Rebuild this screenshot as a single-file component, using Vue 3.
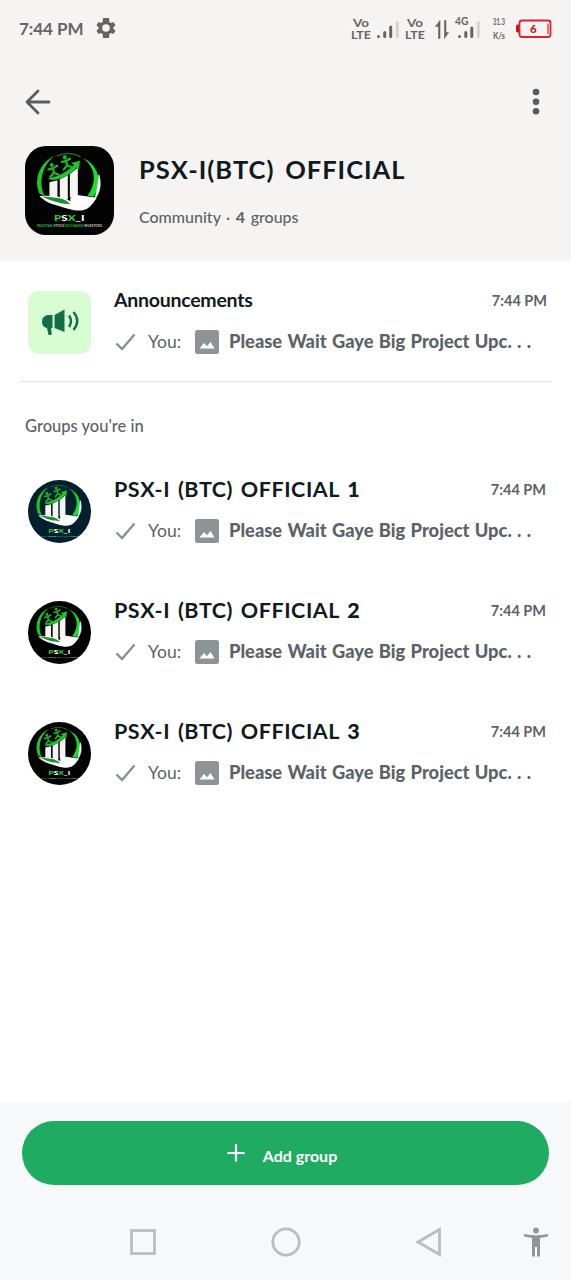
<script setup>
const preview = 'Please Wait Gaye Big Project Upc. . .'
const groups = [
  { name: 'PSX-I (BTC) OFFICIAL', number: '1', tone: 'navy' },
  { name: 'PSX-I (BTC) OFFICIAL', number: '2', tone: 'black' },
  { name: 'PSX-I (BTC) OFFICIAL', number: '3', tone: 'black' },
]
</script>

<template>
  <div class="screen">
    <svg class="defs" width="0" height="0" aria-hidden="true">
      <symbol id="logo" viewBox="32 32 266 266">
        <path d="M120 62C76 82 57 132 75 174L90 181C73 146 79 94 120 62Z" fill="#18c92b" />
        <path d="M127 62A82 82 0 0 1 198 64" fill="none" stroke="#17701f" stroke-width="4" />
        <path d="M203 67C243 92 249 142 219 180L236 184C266 145 254 87 203 67Z" fill="#19df2b" />
        <path d="M253 118C262 150 254 176 239 192C247 171 250 149 253 118Z" fill="#fff" stroke="#fff" stroke-width="2" />
        <path d="M105 140L129 134V185H105ZM136 131L160 118V192H136ZM166 116L190 96V186H166Z" fill="#f4f4f4" />
        <path d="M101 127C105 142 155 132 187 97L193 104L197 75L169 83L178 89C154 113 119 128 101 127Z" fill="#20c72d" stroke="#07310b" stroke-width="1" />
        <g fill="none" stroke="#20b82b" stroke-width="6.5" stroke-linecap="round">
          <path d="M102 102L116 98L128 91M116 99L118 112L108 124M118 112L132 117" />
          <path d="M142 80L155 76L167 70M155 77L158 90L148 102M158 90L171 95" />
        </g>
        <circle cx="112" cy="89" r="6" fill="#20b82b" />
        <circle cx="151" cy="66" r="6" fill="#20b82b" />
        <path d="M75 182C92 179 112 181 131 184C147 187 158 193 169 197C162 186 177 179 194 179L247 187C239 198 231 211 220 218C194 235 151 216 126 209C103 204 90 194 75 182Z" fill="#fff" />
        <path d="M80 183C103 184 122 186 139 189C151 191 161 200 168 206C143 206 119 199 80 183Z" fill="#159326" />
        <text x="119" y="257" textLength="91" lengthAdjust="spacingAndGlyphs" font-size="23" font-weight="900" fill="#fff"><tspan fill="#20d92e">P</tspan>S<tspan fill="#20d92e">X</tspan>_I</text>
        <text x="67" y="273" textLength="195" lengthAdjust="spacingAndGlyphs" font-size="11" font-weight="900" fill="#20b52b">PAKISTAN <tspan fill="#bbb">STOCK</tspan> EXCHANGE <tspan fill="#bbb">INVESTORS</tspan></text>
      </symbol>
    </svg>

    <header class="header">
      <div class="status">
        <span class="clock">7:44 PM</span>
        <svg class="gear" width="20" height="20" viewBox="2 2 20 20">
          <path fill="#666462" fill-rule="evenodd" d="M19.4 13a7.8 7.8 0 0 0 0-2l2.1-1.6-2-3.5-2.5 1a7.6 7.6 0 0 0-1.7-1L15 2H9l-.4 3.9a7.6 7.6 0 0 0-1.7 1l-2.5-1-2 3.5L4.6 11a7.8 7.8 0 0 0 0 2l-2.2 1.6 2 3.5 2.5-1a7.6 7.6 0 0 0 1.7 1L9 22h6l.4-3.9a7.6 7.6 0 0 0 1.7-1l2.5 1 2-3.5ZM12 8.2a3.8 3.8 0 1 1 0 7.6 3.8 3.8 0 0 1 0-7.6Z" />
        </svg>
        <svg class="signals" width="211" height="28" viewBox="345 14 211 28">
          <g fill="#666462" font-weight="700">
            <text x="353" y="26.5" font-size="10.5" textLength="16" lengthAdjust="spacingAndGlyphs">Vo</text>
            <text x="351" y="39" font-size="11.5" textLength="20" lengthAdjust="spacingAndGlyphs">LTE</text>
            <text x="407" y="26.5" font-size="10.5" textLength="16" lengthAdjust="spacingAndGlyphs">Vo</text>
            <text x="405" y="39" font-size="11.5" textLength="20" lengthAdjust="spacingAndGlyphs">LTE</text>
            <text x="455" y="25.3" font-size="11.5" textLength="13.5" lengthAdjust="spacingAndGlyphs">4G</text>
            <text x="493" y="24.5" font-size="8.5" textLength="12" lengthAdjust="spacingAndGlyphs">31.3</text>
            <text x="493" y="38.5" font-size="8.5" textLength="12" lengthAdjust="spacingAndGlyphs">K/s</text>
          </g>
          <g stroke-width="3" stroke-linecap="round" stroke="#666462">
            <path d="M378.5 36.5v0M384.7 32.5v4M390.7 27v9.5M459.5 36.5v0M465.8 32.5v4M471.8 28v8.5" />
            <path d="M397.2 22.5v14M478.3 22.5v14" stroke="#d5d3d1" />
          </g>
          <path d="M440 38.5V20.5L435.5 26.5H438.500V38.500ZM444.500 20.500V38.500L448.500 32.500H446V20.500Z" fill="#666462" stroke="#666462" stroke-width=".6" />
          <rect x="519.5" y="20.5" width="31" height="16.5" rx="2.5" fill="none" stroke="#d8242b" stroke-width="1.8" />
          <path d="M519 24.5h-1.5q-1.5 0-1.5 2v4q0 2 1.5 2h1.5Z" fill="#c3151c" />
          <path d="M548 23.5v10.5" stroke="#d8242b" stroke-width="1.2" />
          <text x="530" y="32.7" font-size="11.5" font-weight="900" fill="#c3151c">6</text>
        </svg>
      </div>
      <nav class="toolbar">
        <svg width="26" height="26" viewBox="0 0 26 26" fill="none" stroke="#555d62" stroke-width="2.8" stroke-linecap="round" stroke-linejoin="round">
          <path d="M24 13H2M13 2L2 13L13 24" />
        </svg>
        <svg width="8" height="28" viewBox="0 0 8 28" fill="#555d62">
          <circle cx="4" cy="4" r="3.3" /><circle cx="4" cy="13.7" r="3.3" /><circle cx="4" cy="23.3" r="3.3" />
        </svg>
      </nav>
      <div class="community">
        <svg class="community-logo"><use href="#logo" /></svg>
        <div>
          <h1>PSX-I(BTC) OFFICIAL</h1>
          <p class="meta">Community · <b>4</b> groups</p>
        </div>
      </div>
    </header>

    <main>
      <section class="row announcement">
        <div class="avatar megaphone">
          <svg width="40" height="30" viewBox="0 0 40 30">
            <path fill="#146c48" d="M8 7h4.500v13H11l.8 6q0 1-2 1H8.500L7 20Q2 19 2 13.500T8 7ZM14.500 7L24.500 1.500V24L14.500 20Z" />
            <path fill="none" stroke="#146c48" stroke-width="2.4" d="M29 7.5Q33 13 29 19M33.500 4Q41 13 33.500 22" />
          </svg>
        </div>
        <div class="body">
          <div class="line"><h2 class="plain">Announcements</h2><time>7:44 PM</time></div>
          <div class="message">
            <svg class="tick" width="21" height="18" viewBox="0 0 21 18"><path d="M1.5 10.5L7 16L19.5 1.5" /></svg>
            <span class="you">You:</span>
            <svg class="photo" width="24" height="24" viewBox="0 0 24 24"><rect width="24" height="24" rx="2.5" /><path d="M4.5 18.500L9 13L12 16.200L15.500 12L19.500 18.500Z" /></svg>
            <span class="preview">{{ preview }}</span>
          </div>
        </div>
      </section>
      <h3>Groups you're in</h3>
      <section v-for="group in groups" :key="group.number" class="row group">
        <div class="avatar round" :class="group.tone"><svg><use href="#logo" /></svg></div>
        <div class="body">
          <div class="line"><h2>{{ group.name }} <b>{{ group.number }}</b></h2><time>7:44 PM</time></div>
          <div class="message">
            <svg class="tick" width="21" height="18" viewBox="0 0 21 18"><path d="M1.5 10.5L7 16L19.5 1.5" /></svg>
            <span class="you">You:</span>
            <svg class="photo" width="24" height="24" viewBox="0 0 24 24"><rect width="24" height="24" rx="2.5" /><path d="M4.5 18.500L9 13L12 16.200L15.500 12L19.500 18.500Z" /></svg>
            <span class="preview">{{ preview }}</span>
          </div>
        </div>
      </section>
    </main>

    <footer>
      <button class="add">
        <svg width="18" height="18" viewBox="0 0 18 18" fill="none" stroke="#fff" stroke-width="2.2" stroke-linecap="round"><path d="M9 1.2v15.600M1.200 9h15.600" /></svg>
        <span>Add group</span>
      </button>
      <div class="system-nav">
        <svg width="26" height="26" viewBox="0 0 26 26"><rect x="1.5" y="1.5" width="23" height="23" /></svg>
        <svg width="30" height="30" viewBox="0 0 30 30"><circle cx="15" cy="15" r="13.2" /></svg>
        <svg width="26" height="30" viewBox="0 0 26 30"><path d="M23.5 2.5v25L2 15Z" /></svg>
        <svg class="person" width="26" height="30" viewBox="0 0 26 30"><circle cx="13" cy="3.5" r="2.9" /><path d="M1 7Q13 9.500 25 7V9.500L17 11V29.500H14V20H12V29.500H9V11L1 9.500Z" /></svg>
      </div>
    </footer>
  </div>
</template>

<style>
body { margin: 0; }
</style>

<style scoped>
.screen { width: 571px; height: 1280px; display: flex; flex-direction: column; overflow: hidden; background: #fff; color: #101a20; font-family: Lato, "Open Sans", sans-serif; }
.screen svg { flex: none; display: block; }
.screen .defs { display: none; }
h1, h2, h3, p { margin: 0; white-space: nowrap; }
.header { height: 261px; box-sizing: border-box; background: #f6f4f2; }
.status { height: 58px; box-sizing: border-box; padding: 0 15px 2px 19px; display: flex; align-items: center; }
.clock { width: 77px; font-size: 17px; font-weight: 700; color: #666462; }
.signals { margin-left: auto; }
.toolbar { height: 88px; box-sizing: border-box; padding: 0 31px 1px 25px; display: flex; align-items: center; justify-content: space-between; }
.community { display: flex; gap: 25px; padding-left: 25px; }
.community-logo { width: 89px; height: 89px; border-radius: 21px; background: #020302; }
h1 { margin-top: 7px; height: 33px; line-height: 32px; font-size: 25.5px; font-weight: 700; letter-spacing: 1px; word-spacing: 3.5px; }
.meta { margin-top: 19px; height: 24px; line-height: 24px; font-size: 16px; font-weight: 500; word-spacing: 1.5px; color: #5b6368; }
.row { display: flex; padding: 0 25px 0 28px; }
.announcement { height: 91px; margin: 0 19px 0 20px; padding: 29px 5px 0 8px; border-bottom: 1px solid #e3e4e5; }
.avatar { flex: none; width: 63px; height: 63px; margin: 1px 23px 0 0; }
.megaphone { display: flex; align-items: center; justify-content: center; border-radius: 11px; background: #d8fdd2; }
.round { border-radius: 50%; overflow: hidden; background: #020302; }
.round.navy { background: #04202f; }
.round svg { width: 63px; height: 63px; }
.body { flex: 1; min-width: 0; }
.line { height: 20px; display: flex; align-items: center; justify-content: space-between; }
h2 { font-size: 21.5px; line-height: 24px; font-weight: 700; letter-spacing: .55px; word-spacing: 2px; }
h2.plain { font-size: 19.5px; letter-spacing: -.25px; }
h2 b { font-weight: 900; }
time { font-size: 14.5px; font-weight: 700; color: #5b6368; }
.message { height: 24px; margin-top: 20px; display: flex; align-items: center; white-space: nowrap; color: #5b6368; }
.tick { margin-left: 1px; fill: none; stroke: #899094; stroke-width: 2.4; }
.you { width: 47px; margin: -2px 0 0 12px; font-size: 17.5px; }
.photo rect { fill: #8c9498; }
.photo path { fill: #fff; }
.preview { margin: -2px 0 0 10px; font-size: 18.3px; font-weight: 900; word-spacing: 1px; }
h3 { height: 97px; box-sizing: border-box; padding: 31px 0 0 25px; line-height: 26px; font-size: 16.5px; font-weight: 500; color: #5b6368; }
.group { height: 121px; }
footer { height: 178px; margin-top: auto; padding: 19px 22px 0; box-sizing: border-box; background: #f6f8fa; }
.add { width: 527px; height: 64px; padding: 0 7px 0 0; border: 0; border-radius: 32px; display: flex; align-items: center; justify-content: center; gap: 18px; background: #1fab61; color: #fff; font: 700 16px Lato, sans-serif; }
.add span { padding-top: 4px; }
.system-nav { display: grid; grid-template-columns: 129px 157px 129px 85px; height: 114px; margin-left: 56px; align-items: center; justify-items: center; fill: none; stroke: #bbbdbe; stroke-width: 2.8; }
.person { fill: #929495; stroke: none; }
</style>
